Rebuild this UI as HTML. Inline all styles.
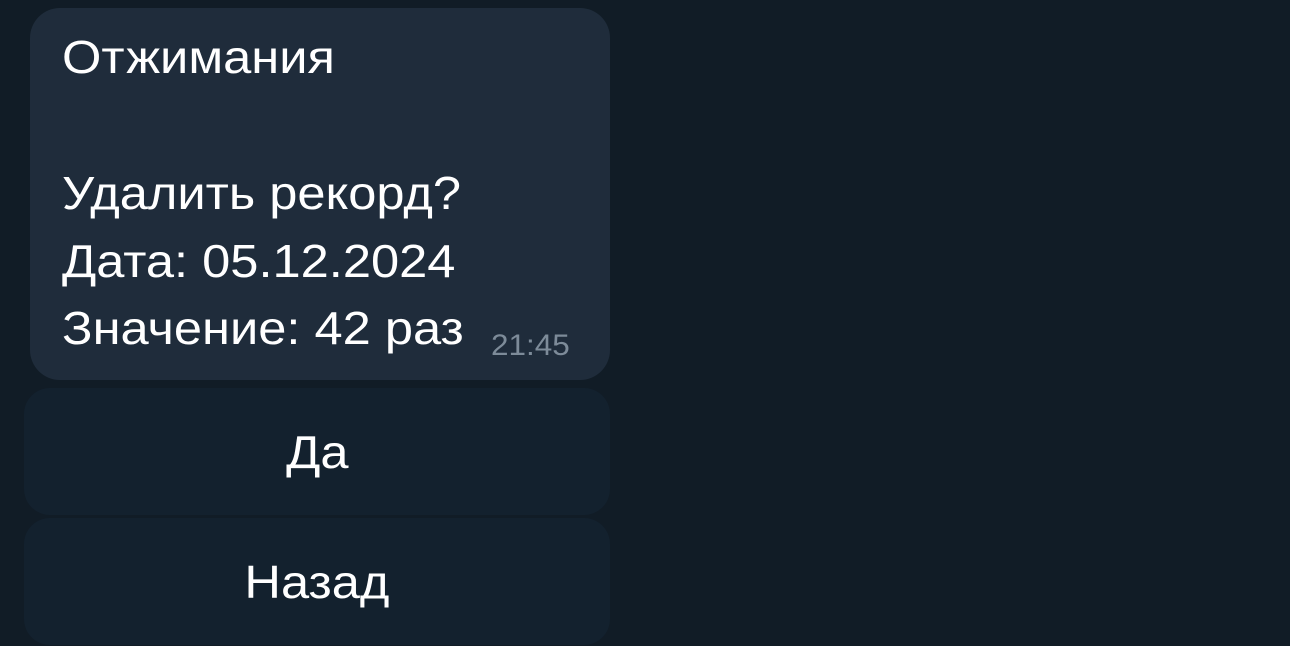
<!DOCTYPE html>
<html><head><meta charset="utf-8"><style>
html,body{margin:0;padding:0}
body{width:1290px;height:646px;overflow:hidden;background:#111c26;position:relative;font-family:"Liberation Sans",sans-serif;color:#fff}
.bubble{position:absolute;left:30px;top:8px;width:580px;height:372px;background:#1f2c3b;border-radius:30px}
.t{position:absolute;left:62px;font-size:46px;line-height:52px;white-space:nowrap;transform:scaleX(1.1);transform-origin:left}
.time{position:absolute;left:491px;top:329px;font-size:30px;color:#7d8b99;transform:scaleX(1.05);transform-origin:left}
.btn{position:absolute;left:24px;width:586px;height:127px;background:#13212e;border-radius:26px;display:flex;align-items:center;justify-content:center;font-size:46px}
.btn span{transform:scaleX(1.1);margin-left:0px}
</style></head><body>
<div class="bubble"></div>
<div class="t" style="top:31px">Отжимания</div>
<div class="t" style="top:167px">Удалить рекорд?</div>
<div class="t" style="top:235px">Дата: 05.12.2024</div>
<div class="t" style="top:302px">Значение: 42 раз</div>
<div class="time">21:45</div>
<div class="btn" style="top:388px"><span>Да</span></div>
<div class="btn" style="top:518px"><span>Назад</span></div>
</body></html>
